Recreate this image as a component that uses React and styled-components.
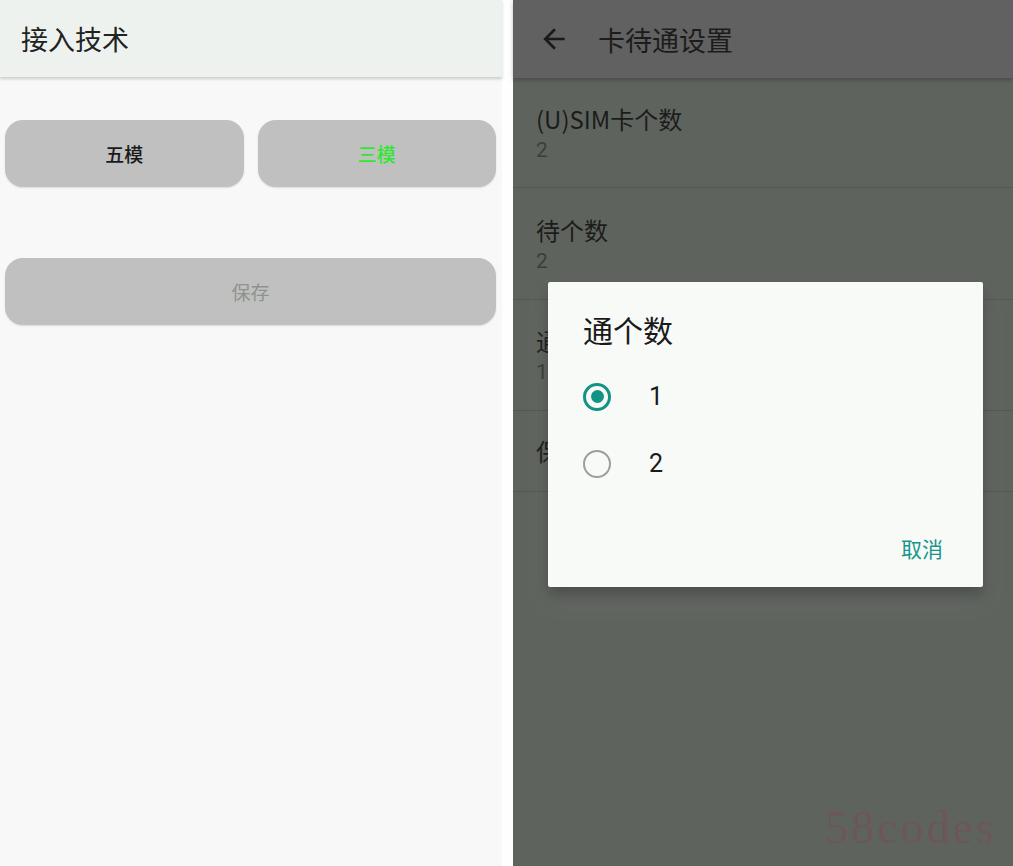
import React from 'react';
import styled, { createGlobalStyle } from 'styled-components';

const GlobalStyle = createGlobalStyle`
  html, body {
    margin: 0;
    padding: 0;
    background: #fdfdfd;
  }
  body {
    font-family: "Noto Sans CJK SC", "Noto Sans", Roboto, sans-serif;
  }
`;

const Page = styled.div`
  display: flex;
  width: 1013px;
  height: 866px;
  overflow: hidden;
  background: #fdfdfd;
`;

const LeftPanel = styled.div`
  width: 502px;
  flex-shrink: 0;
  background: #f8f8f8;
  display: flex;
  flex-direction: column;
`;

const LeftHeader = styled.header`
  height: 77px;
  background: #eef2ee;
  box-shadow: 0 2px 3px rgba(0, 0, 0, 0.18);
  display: flex;
  align-items: center;
  padding-left: 21px;
  font-size: 27px;
  color: #222;
  position: relative;
  z-index: 1;
`;

const ButtonRow = styled.div`
  display: grid;
  grid-template-columns: 1fr 1fr;
  gap: 14px;
  padding: 0 6px 0 5px;
  margin-top: 43px;
`;

const PillButton = styled.button`
  height: 67px;
  border: none;
  border-radius: 18px;
  background: #c0c0c0;
  box-shadow: 0 1px 2px rgba(0, 0, 0, 0.12);
  font-family: inherit;
  font-size: 19px;
  font-weight: ${p => p.$weight || 400};
  color: ${p => p.$color || '#1a1a1a'};
  padding: 0;
`;

const SaveWrap = styled.div`
  padding: 0 6px 0 5px;
  margin-top: 71px;
  display: flex;
  flex-direction: column;
`;

const Gap = styled.div`
  width: 11px;
  flex-shrink: 0;
  background: #fefefe;
`;

const RightPanel = styled.div`
  width: 500px;
  flex-shrink: 0;
  background: #5f635e;
  position: relative;
  display: flex;
  flex-direction: column;
`;

const RightHeader = styled.header`
  height: 78px;
  background: #616161;
  box-shadow: 0 2px 4px rgba(0, 0, 0, 0.25);
  display: flex;
  align-items: center;
  padding-left: 25px;
  gap: 28px;
  font-size: 27px;
  color: #1c1c1c;
  position: relative;
  z-index: 1;
`;

const BackIcon = () => (
  <svg width="32" height="32" viewBox="0 0 24 24" fill="#1a1a1a">
    <path d="M20 11H7.83l5.59-5.59L12 4l-8 8 8 8 1.41-1.41L7.83 13H20v-2z" />
  </svg>
);

const Item = styled.div`
  height: ${p => p.$h}px;
  border-bottom: 1px solid #535652;
  padding-left: 23px;
  display: flex;
  flex-direction: column;
  justify-content: center;
  box-sizing: border-box;
`;

const ItemTitle = styled.div`
  font-size: 24px;
  line-height: 34px;
  color: #1b1d1b;
`;

const ItemValue = styled.div`
  font-family: Roboto, "Noto Sans", sans-serif;
  font-size: 21px;
  line-height: 28px;
  color: #3b3e3b;
`;

const Dialog = styled.div`
  position: absolute;
  left: 35px;
  top: 282px;
  width: 435px;
  height: 305px;
  background: #f8faf7;
  border-radius: 2px;
  box-shadow: 0 8px 14px rgba(0, 0, 0, 0.25), 0 14px 30px 8px rgba(255, 255, 255, 0.04);
  box-sizing: border-box;
  padding: 29px 40px 0 35px;
  display: flex;
  flex-direction: column;
`;

const DialogTitle = styled.div`
  font-size: 30px;
  line-height: 36px;
  color: #1a1a1a;
  margin-bottom: 16px;
`;

const OptionRow = styled.div`
  height: 67px;
  display: flex;
  align-items: center;
  gap: 38px;
`;

const Radio = styled.span`
  width: 28px;
  height: 28px;
  box-sizing: border-box;
  border-radius: 50%;
  border: ${p => (p.$checked ? '3px solid #119484' : '2.5px solid #9e9e9e')};
  display: flex;
  align-items: center;
  justify-content: center;

  &::after {
    content: '';
    width: 13px;
    height: 13px;
    border-radius: 50%;
    background: ${p => (p.$checked ? '#119484' : 'transparent')};
  }
`;

const OptionLabel = styled.span`
  font-family: Roboto, "Noto Sans", sans-serif;
  font-size: 25px;
  color: #1a1a1a;
`;

const DialogActions = styled.div`
  margin-top: auto;
  height: 78px;
  display: flex;
  justify-content: flex-end;
  align-items: center;
`;

const TextButton = styled.span`
  font-size: 21px;
  color: #17968a;
`;

const Watermark = styled.div`
  position: absolute;
  right: 16px;
  bottom: 12px;
  font-family: "Liberation Serif", "DejaVu Serif", serif;
  font-size: 46px;
  letter-spacing: 3px;
  color: rgba(140, 60, 70, 0.32);
`;

export default function App() {
  return (
    <>
      <GlobalStyle />
      <Page>
        <LeftPanel>
          <LeftHeader>接入技术</LeftHeader>
          <ButtonRow>
            <PillButton $weight={500}>五模</PillButton>
            <PillButton $color="#33e533" $weight={500}>三模</PillButton>
          </ButtonRow>
          <SaveWrap>
            <PillButton $color="#8c948b">保存</PillButton>
          </SaveWrap>
        </LeftPanel>
        <Gap />
        <RightPanel>
          <RightHeader>
            <BackIcon />
            <span>卡待通设置</span>
          </RightHeader>
          <Item $h={110}>
            <ItemTitle>(U)SIM卡个数</ItemTitle>
            <ItemValue>2</ItemValue>
          </Item>
          <Item $h={112}>
            <ItemTitle>待个数</ItemTitle>
            <ItemValue>2</ItemValue>
          </Item>
          <Item $h={111}>
            <ItemTitle>通个数</ItemTitle>
            <ItemValue>1</ItemValue>
          </Item>
          <Item $h={81}>
            <ItemTitle>保存</ItemTitle>
          </Item>
          <Dialog>
            <DialogTitle>通个数</DialogTitle>
            <OptionRow>
              <Radio $checked />
              <OptionLabel>1</OptionLabel>
            </OptionRow>
            <OptionRow>
              <Radio />
              <OptionLabel>2</OptionLabel>
            </OptionRow>
            <DialogActions>
              <TextButton>取消</TextButton>
            </DialogActions>
          </Dialog>
          <Watermark>58codes</Watermark>
        </RightPanel>
      </Page>
    </>
  );
}
